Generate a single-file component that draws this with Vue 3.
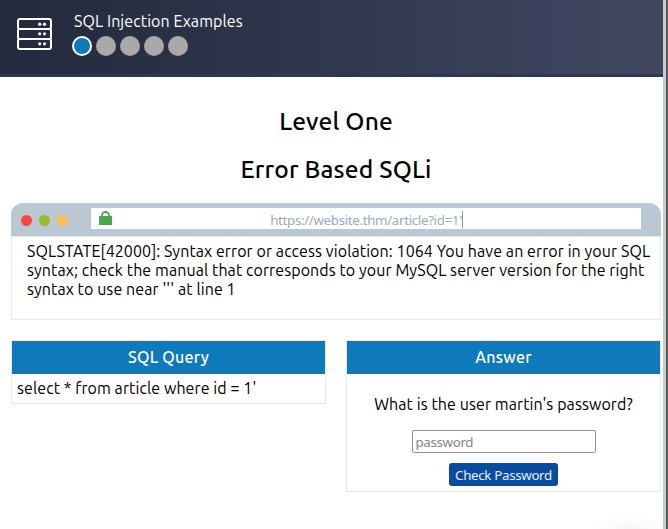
<script setup>
const levels = [1, 2, 3, 4, 5]
const current = 1
const messageLines = [
  'SQLSTATE[42000]: Syntax error or access violation: 1064 You have an error in your SQL',
  'syntax; check the manual that corresponds to your MySQL server version for the right',
  "syntax to use near ''' at line 1",
]
</script>

<template>
  <div class="window">
    <div class="page">
      <header class="topbar">
        <svg class="logo" width="36" height="34" viewBox="0 0 36 34" fill="none" stroke="#fff" stroke-width="2">
          <rect x="1" y="1" width="33" height="10" rx="2" />
          <rect x="1" y="11" width="33" height="10" rx="1.5" />
          <rect x="1" y="21" width="33" height="10" rx="2" />
          <g fill="#fff" stroke="none">
            <circle cx="22.7" cy="6.2" r="1.6" /><circle cx="27.5" cy="6.2" r="1.6" />
            <circle cx="22.7" cy="15.8" r="1.6" /><circle cx="27.5" cy="15.8" r="1.6" />
            <circle cx="22.7" cy="25.8" r="1.6" /><circle cx="27.5" cy="25.8" r="1.6" />
          </g>
        </svg>
        <div class="heading">
          <div class="title">SQL Injection Examples</div>
          <div class="dots">
            <span v-for="n in levels" :key="n" class="dot" :class="{ active: n === current }"></span>
          </div>
        </div>
      </header>

      <main>
        <h2>Level One</h2>
        <h2>Error Based SQLi</h2>

        <section class="browser">
          <div class="chrome">
            <div class="lights"><i class="red"></i><i class="green"></i><i class="amber"></i></div>
            <div class="address">
              <svg class="lock" width="13" height="15" viewBox="0 0 13 15">
                <path d="M3 6V4.3a3.5 3.3 0 0 1 7 0V6" fill="none" stroke="#4ca64f" stroke-width="1.8" />
                <rect x="0" y="5" width="13" height="9" rx="0.6" fill="#4ca64f" />
              </svg>
              <span class="url">https://website.thm/article?id=1'</span><span class="caret"></span>
            </div>
          </div>
          <div class="result">
            <div v-for="(line, i) in messageLines" :key="i">{{ line }}</div>
          </div>
        </section>

        <div class="panels">
          <section class="panel">
            <h3>SQL Query</h3>
            <div class="query">select * from article where id = 1'</div>
          </section>
          <section class="panel answer">
            <h3>Answer</h3>
            <p>What is the user martin's password?</p>
            <input type="text" placeholder="password" />
            <button>Check Password</button>
          </section>
        </div>
      </main>
    </div>
    <div class="scroll"></div>
    <div class="edge"></div>
  </div>
</template>

<style>
body { margin: 0; overflow: hidden; background: #fff; }
</style>

<style scoped>
* { box-sizing: border-box; }
.window {
  display: flex; width: 668px; height: 529px; overflow: hidden;
  font-family: "Ubuntu", "Noto Sans", sans-serif; font-size: 16px; line-height: 19px; letter-spacing: 0.085px;
  color: #000; white-space: nowrap;
}
.page {
  width: 663px; height: 529px;
  background: radial-gradient(ellipse 42px 16px at 630px 531px, #f5f5f5, #fff);
}
.scroll { width: 3px; background: #c8caca; }
.edge { width: 2px; background: #555d5b; }
.topbar {
  display: flex; height: 77px; padding: 0 0 0 17px;
  border-bottom: 3px solid #2e3654;
  background: linear-gradient(90deg, #242a3d, #2c3449 38%, #3c435e 85%, #40475f);
}
.logo { margin-top: 18px; }
.heading { margin: 11px 0 0 19px; }
.title { height: 20px; padding-left: 2px; color: #fff; line-height: 21px; }
.dots { display: flex; gap: 4px; margin-top: 5px; }
.dot { width: 20px; height: 20px; border-radius: 50%; background: #a9a9a9; }
.dot.active { background: #0f7abb; border: 2px solid #fff; }
main { padding: 30px 2px 0 11px; }
h2 { margin: 0; height: 48px; line-height: 28px; font-size: 24.5px; font-weight: 500; letter-spacing: 0.15px; text-align: center; }
.browser { width: 650px; }
.chrome { display: flex; height: 33px; border-radius: 12px 12px 0 0; background: #bbc7d1; }
.lights { display: flex; gap: 7px; padding: 12px 0 0 10px; width: 80px; }
.lights i { width: 11px; height: 11px; border-radius: 50%; }
.red { background: #ff4444; }
.green { background: #99bb33; }
.amber { background: #ffbb55; }
.address {
  display: flex; align-items: center; justify-content: center; position: relative;
  width: 550px; height: 21px; margin-top: 5px; background: #fff;
}
.lock { position: absolute; left: 8px; top: 3px; }
.url { color: #9aabbc; font: 13.333px/21px "Noto Sans", sans-serif; letter-spacing: -0.33px; padding: 3px 0 0 1px; }
.caret { width: 1px; height: 17px; margin-top: 2px; background: #8196aa; }
.result { height: 84px; padding: 5px 0 0 15px; border: 1px solid #e9e9e9; }
.panels { display: flex; align-items: flex-start; gap: 20px; margin-top: 20px; }
.panel { width: 315px; border: 1px solid #e9e9e9; }
h3 { margin: 0; height: 33px; line-height: 32px; font-size: 16px; font-weight: 500; letter-spacing: 0.25px; text-align: center; color: #fff; background: #0f7abb; }
.query { height: 29px; padding: 5px; }
.answer { display: flex; flex-direction: column; align-items: center; height: 152px; }
.answer h3 { align-self: stretch; }
p { margin: 21px 0 16px; }
input {
  width: 184px; height: 23px; padding: 1px 3px 0; border: 1px solid #8f8f9d; border-radius: 2px;
  font: 13.333px "Noto Sans", sans-serif; letter-spacing: -0.35px; background: #fff;
}
input::placeholder { color: #858585; }
button {
  width: 109px; height: 23px; margin-top: 10px; padding: 1px 0 0; border: 0; border-radius: 3px;
  background: #094c9f; color: #e8eef8; font: 13.333px "Noto Sans", sans-serif; letter-spacing: -0.33px;
}
</style>
